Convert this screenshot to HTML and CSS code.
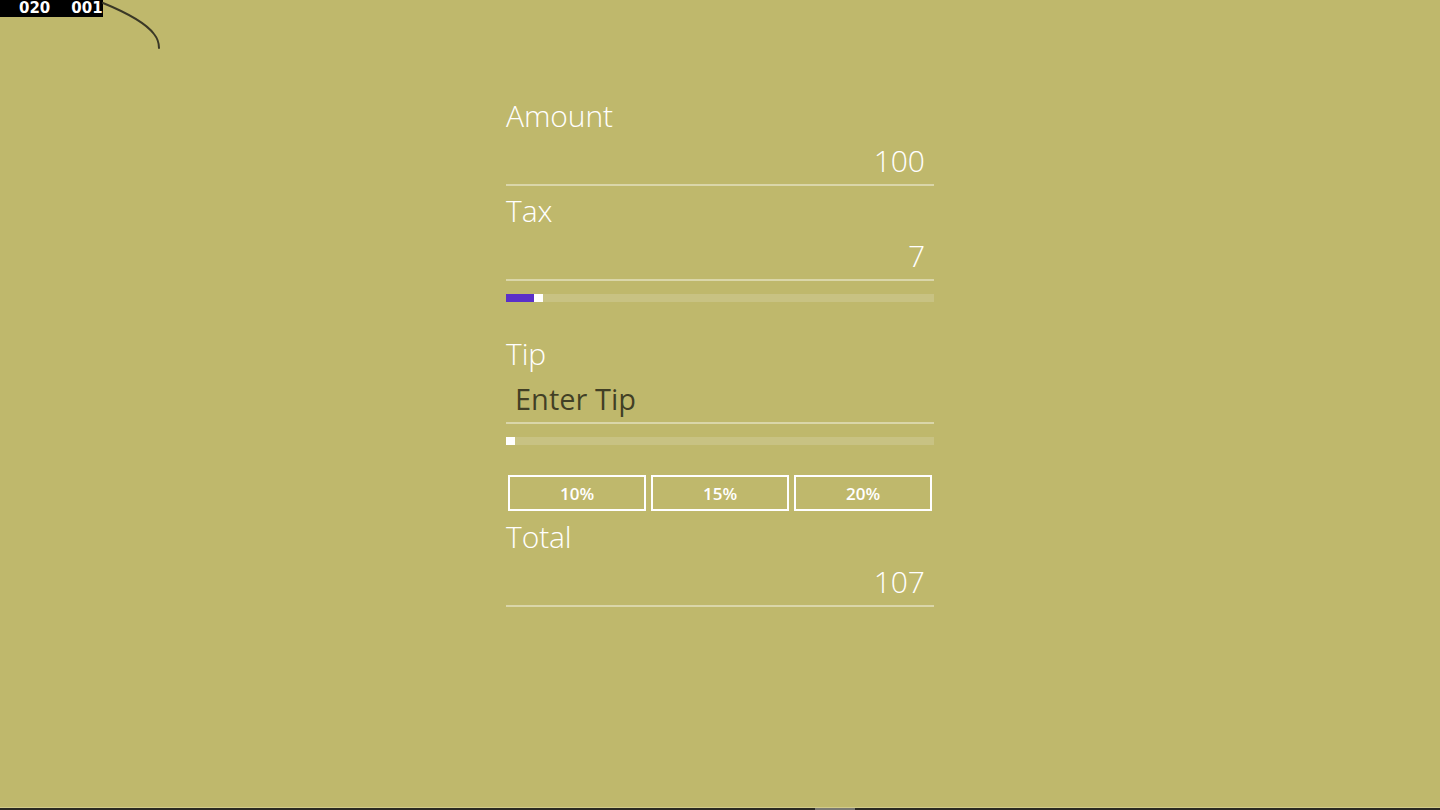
FILE: index.html
```html
<!DOCTYPE html>
<html lang="en">
<head>
<meta charset="utf-8">
<title>Tip Calculator</title>
<link rel="stylesheet" href="styles.css">
</head>
<body>
<div class="screen">
  <div class="counter"><span>020</span><span>001</span></div>
  <svg class="stroke" width="170" height="60" viewBox="0 0 170 60" aria-hidden="true">
    <path d="M103 3 C 125 12, 145 22, 154 34 C 158 39, 159 43, 159 48" fill="none" stroke="#3a3826" stroke-width="2" stroke-linecap="round"/>
  </svg>
  <main class="calc">
    <section class="field">
      <div class="label">Amount</div>
      <div class="value">100</div>
    </section>
    <section class="field">
      <div class="label">Tax</div>
      <div class="value">7</div>
    </section>
    <div class="slider slider-tax">
      <div class="fill" style="width:28px"></div>
      <div class="thumb"></div>
    </div>
    <section class="field field-tip">
      <div class="label">Tip</div>
      <div class="value placeholder">Enter Tip</div>
    </section>
    <div class="slider slider-tip">
      <div class="thumb"></div>
    </div>
    <div class="buttons">
      <button class="pct">10%</button>
      <button class="pct">15%</button>
      <button class="pct">20%</button>
    </div>
    <section class="field field-total">
      <div class="label">Total</div>
      <div class="value">107</div>
    </section>
  </main>
  <footer class="edge">
    <div class="edge-light"></div>
    <div class="edge-dark"><div class="edge-grey"></div></div>
  </footer>
</div>
</body>
</html>
```
FILE: styles.css
```css
html, body {
  margin: 0;
  padding: 0;
}
body {
  background: #bfb86c;
  font-family: "Open Sans", "Noto Sans", sans-serif;
  color: #ffffff;
  overflow: hidden;
}
.screen {
  position: relative;
  height: 810px;
  display: flex;
  flex-direction: column;
}
.counter {
  position: absolute;
  left: 0;
  top: 0;
  width: 103px;
  height: 17px;
  background: #000;
  color: #fff;
  font-family: "DejaVu Sans", "Liberation Sans", sans-serif;
  font-weight: bold;
  font-size: 15px;
  line-height: 17px;
  display: flex;
  gap: 21px;
  padding-left: 19px;
  box-sizing: border-box;
}
.stroke {
  position: absolute;
  left: 0;
  top: 0;
}
.calc {
  flex: 1;
  width: 428px;
  margin: 0 auto;
  padding-top: 96px;
  display: flex;
  flex-direction: column;
}
.field {
  display: flex;
  flex-direction: column;
}
.field + .field {
  margin-top: 5px;
}
.label {
  font-size: 30px;
  font-weight: 300;
  line-height: 40px;
  height: 40px;
  letter-spacing: -0.1px;
}
.value {
  height: 50px;
  box-sizing: border-box;
  padding-top: 5px;
  padding-right: 9px;
  font-size: 30px;
  font-weight: 300;
  line-height: 40px;
  text-align: right;
  border-bottom: 2px solid rgba(255, 255, 255, 0.42);
}
.value.placeholder {
  text-align: left;
  padding-left: 9px;
  padding-top: 5px;
  font-weight: 400;
  font-size: 29px;
  color: rgba(0, 0, 0, 0.66);
}
.slider {
  height: 8px;
  background: #c8c283;
  display: flex;
}
.slider-tax {
  margin-top: 13px;
}
.slider-tip {
  margin-top: 13px;
}
.fill {
  background: #5a30c8;
  height: 100%;
}
.thumb {
  width: 9px;
  height: 100%;
  background: #ffffff;
}
.field-tip {
  margin-top: 32px;
}
.buttons {
  display: flex;
  gap: 5px;
  margin: 30px 2px 0;
}
.pct {
  flex: 1;
  height: 36px;
  background: transparent;
  border: 2px solid #ffffff;
  color: #ffffff;
  font-family: "Open Sans", "Noto Sans", sans-serif;
  font-weight: 600;
  font-size: 17px;
  padding: 0;
  cursor: pointer;
}
.field-total {
  margin-top: 6px;
}
.edge {
  height: 3px;
  display: flex;
  flex-direction: column;
}
.edge-light {
  height: 1px;
  background: #d2cc8a;
}
.edge-dark {
  height: 2px;
  background: #2a2a22;
  position: relative;
}
.edge-grey {
  position: absolute;
  left: 815px;
  top: 0;
  width: 40px;
  height: 2px;
  background: #7a7a72;
}
```
